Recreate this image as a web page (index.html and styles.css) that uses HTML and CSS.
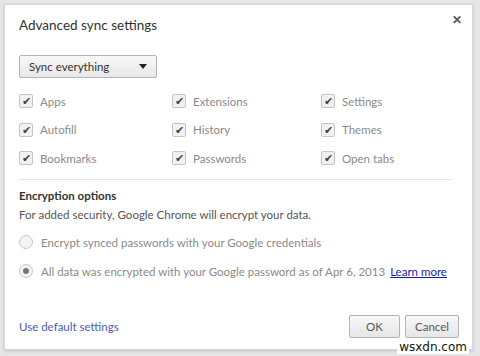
FILE: index.html
```html
<!DOCTYPE html>
<html lang="en">
<head>
    <meta charset="UTF-8">
    <title>Advanced sync settings</title>
    <link rel="stylesheet" href="styles.css">
</head>
<body>
    <div class="dialog">
        <div class="dialog-head">
            <h1>Advanced sync settings</h1>
            <span class="close">&#x2715;</span>
        </div>

        <div class="select">
            <span>Sync everything</span>
            <span class="arrow"></span>
        </div>

        <div class="types">
            <label class="check"><span class="box">&#x2714;</span>Apps</label>
            <label class="check"><span class="box">&#x2714;</span>Extensions</label>
            <label class="check"><span class="box">&#x2714;</span>Settings</label>
            <label class="check"><span class="box">&#x2714;</span>Autofill</label>
            <label class="check"><span class="box">&#x2714;</span>History</label>
            <label class="check"><span class="box">&#x2714;</span>Themes</label>
            <label class="check"><span class="box">&#x2714;</span>Bookmarks</label>
            <label class="check"><span class="box">&#x2714;</span>Passwords</label>
            <label class="check"><span class="box">&#x2714;</span>Open tabs</label>
        </div>

        <div class="encryption">
            <h2>Encryption options</h2>
            <p>For added security, Google Chrome will encrypt your data.</p>
            <label class="radio"><span class="dot"></span>Encrypt synced passwords with your Google credentials</label>
            <label class="radio"><span class="dot on"></span>All data was encrypted with your Google password as of Apr 6, 2013 <a href="#" class="learn">Learn more</a></label>
        </div>

        <div class="dialog-foot">
            <a href="#" class="defaults">Use default settings</a>
            <div class="buttons">
                <button class="btn ok">OK</button>
                <button class="btn">Cancel</button>
            </div>
        </div>
    </div>
    <div class="mark">wsxdn.com</div>
</body>
</html>
```

FILE: styles.css
```css
* {
    margin: 0;
    padding: 0;
    box-sizing: border-box;
}

body {
    background: #e6e6e6;
    font-family: Lato, 'Noto Sans', sans-serif;
    font-size: 11.5px;
    color: #333;
    width: 480px;
    height: 356px;
    padding: 4px 7px 6px 4px;
    position: relative;
}

.dialog {
    background: #fff;
    border: 1px solid #d6d6d6;
    box-shadow: 0 1px 3px rgba(0, 0, 0, 0.15);
    height: 346px;
    padding: 0 13px 0 14px;
    display: flex;
    flex-direction: column;
}

.dialog-head {
    display: flex;
    justify-content: space-between;
    align-items: flex-start;
    height: 50px;
}

.dialog-head h1 {
    font-size: 13.5px;
    font-weight: normal;
    color: #333;
    margin-top: 12px;
}

.close {
    font-size: 12px;
    font-weight: bold;
    color: #555;
    margin-top: 7px;
    margin-right: -3px;
}

.select {
    width: 138px;
    height: 23px;
    border: 1px solid #b4b4b4;
    border-radius: 2px;
    background: linear-gradient(#f8f8f8, #e8e8e8);
    display: flex;
    align-items: center;
    justify-content: space-between;
    padding: 0 9px 0 9px;
    color: #333;
}

.arrow {
    width: 0;
    height: 0;
    border-left: 4px solid transparent;
    border-right: 4px solid transparent;
    border-top: 5px solid #222;
}

.types {
    display: grid;
    grid-template-columns: 153px 149px 1fr;
    row-gap: 10.5px;
    margin-top: 14px;
    padding-bottom: 12px;
    border-bottom: 1px solid #e6e6e6;
    margin-right: 7px;
}

.check {
    display: flex;
    align-items: center;
    color: #8a8a8a;
    height: 18px;
}

.box {
    width: 14px;
    height: 14px;
    border: 1px solid #c4c4c4;
    border-radius: 2px;
    background: #f1f1f1;
    color: #444;
    font-size: 11px;
    line-height: 12px;
    text-align: center;
    margin-right: 7px;
}

.encryption {
    margin-top: 6px;
}

.encryption h2 {
    font-size: 11.5px;
    font-weight: bold;
    color: #333;
    line-height: 19px;
}

.encryption p {
    line-height: 19px;
    color: #555;
    margin-bottom: 9px;
}

.radio {
    display: flex;
    align-items: center;
    color: #8a8a8a;
    height: 18px;
    margin-bottom: 11px;
    white-space: nowrap;
}

.dot {
    width: 14px;
    height: 14px;
    border: 1px solid #c8c8c8;
    border-radius: 50%;
    background: #f4f4f4;
    margin-right: 8px;
    display: flex;
    align-items: center;
    justify-content: center;
}

.dot.on::after {
    content: '';
    width: 6px;
    height: 6px;
    border-radius: 50%;
    background: #777;
}

.learn {
    color: #1a1aa6;
    text-decoration: underline;
    margin-left: 5px;
}

.dialog-foot {
    margin-top: auto;
    display: flex;
    justify-content: space-between;
    align-items: center;
    padding-bottom: 11px;
}

.defaults {
    color: #4b5bb5;
    text-decoration: none;
}

.buttons {
    display: flex;
    gap: 5px;
}

.btn {
    font-family: inherit;
    font-size: 11.5px;
    color: #555;
    height: 23px;
    border: 1px solid #b4b4b4;
    border-radius: 2px;
    background: linear-gradient(#f8f8f8, #e6e6e6);
}

.btn.ok {
    width: 51px;
}

.btn:not(.ok) {
    width: 54px;
}

.mark {
    position: absolute;
    right: 11px;
    bottom: 2px;
    font-family: 'DejaVu Sans', sans-serif;
    font-size: 12px;
    color: #111;
    background: #fff;
    padding: 0 2px;
}
```
